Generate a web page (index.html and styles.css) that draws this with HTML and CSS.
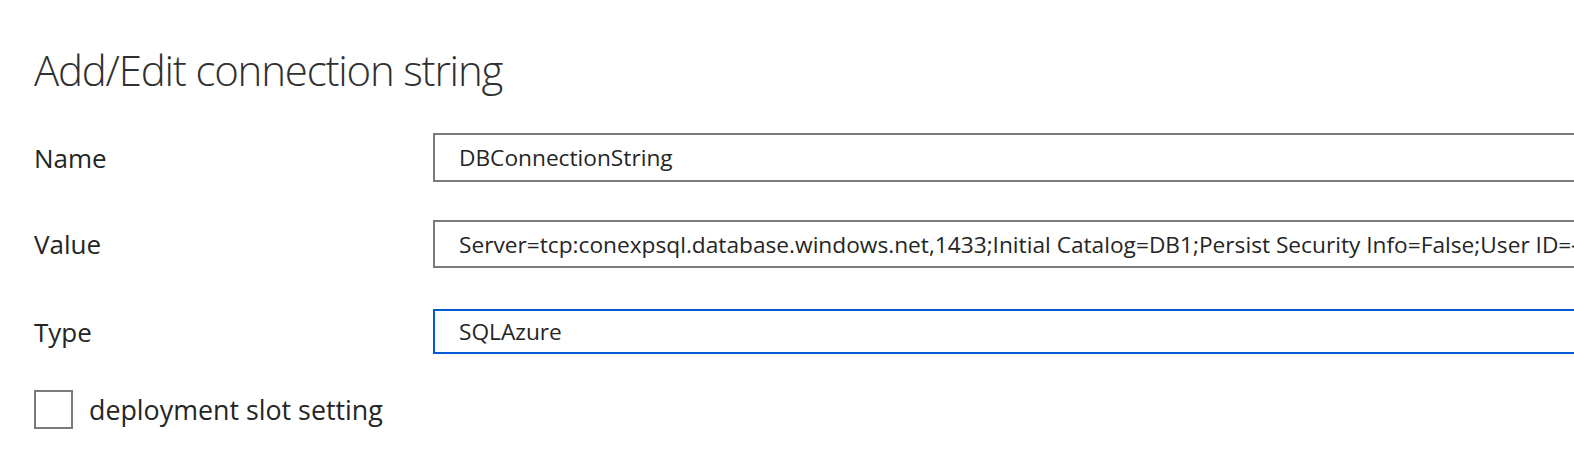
FILE: index.html
```html
<!DOCTYPE html>
<html lang="en">
<head>
<meta charset="utf-8">
<title>Add/Edit connection string</title>
<link rel="stylesheet" href="styles.css">
</head>
<body>
<main class="panel">
  <h1 class="title">Add/Edit connection string</h1>
  <div class="form">
    <div class="row row-name">
      <label class="label" for="name">Name</label>
      <div class="field">DBConnectionString</div>
    </div>
    <div class="row row-value">
      <label class="label" for="value">Value</label>
      <div class="field">Server=tcp:conexpsql.database.windows.net,1433;Initial Catalog=DB1;Persist Security Info=False;User ID={your_username};Password={your_password};MultipleActiveResultSets=False;</div>
    </div>
    <div class="row row-type">
      <label class="label" for="type">Type</label>
      <div class="field field-focus">SQLAzure</div>
    </div>
    <div class="check-row">
      <span class="checkbox"></span>
      <span class="check-label">deployment slot setting</span>
    </div>
  </div>
</main>
</body>
</html>
```

FILE: styles.css
```css
html, body {
  margin: 0;
  padding: 0;
  background: #ffffff;
  overflow: hidden;
}
body {
  font-family: "Open Sans", "Noto Sans", "Liberation Sans", sans-serif;
  color: #252525;
}
.panel {
  padding: 40px 0 0 34px;
}
.title {
  margin: 0;
  font-weight: 300;
  font-size: 42px;
  letter-spacing: -1.2px;
  line-height: 60px;
  color: #303030;
}
.form {
  margin-top: 33px;
  display: flex;
  flex-direction: column;
}
.row {
  display: grid;
  grid-template-columns: 399px 1400px;
  align-items: center;
}
.row-value { margin-top: 38px; }
.row-type { margin-top: 41px; }
.label {
  font-size: 26px;
  color: #252525;
}
.field {
  box-sizing: border-box;
  height: 49px;
  border: 2px solid #7a7a7a;
  padding: 0 24px;
  display: flex;
  align-items: center;
  font-size: 22.7px;
  white-space: nowrap;
  overflow: hidden;
  color: #252525;
}
.row-value .field { height: 48px; }
.field-focus {
  height: 45px;
  border-color: #005ad6;
}
.check-row {
  margin-top: 36px;
  display: flex;
  align-items: center;
  gap: 16px;
}
.checkbox {
  box-sizing: border-box;
  width: 39px;
  height: 39px;
  border: 2px solid #7a7a7a;
}
.check-label {
  font-size: 26.8px;
  color: #252525;
}
```
